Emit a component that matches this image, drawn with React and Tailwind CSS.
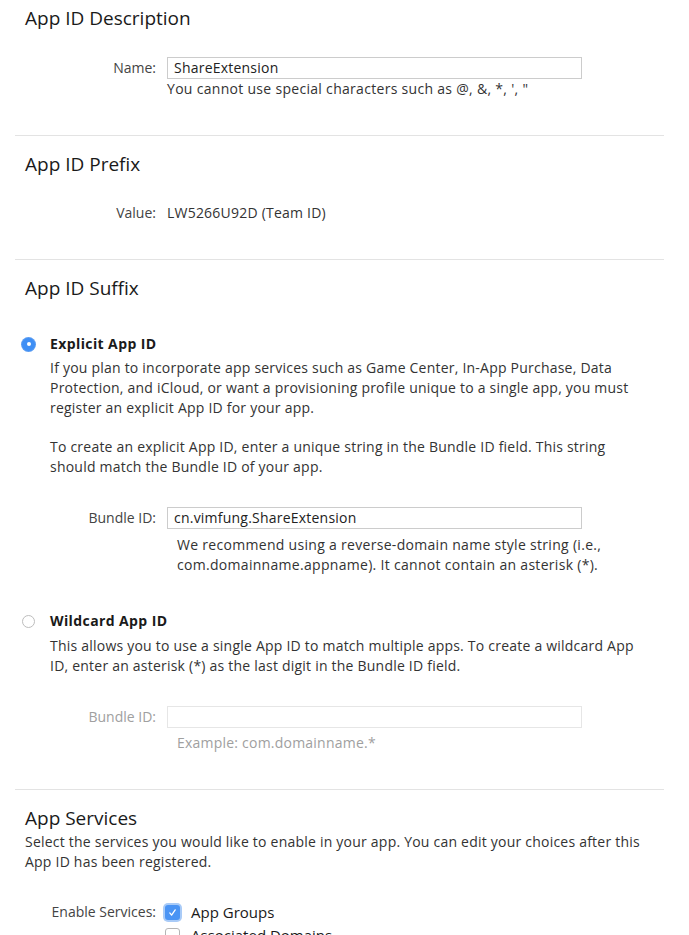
import React from "react";

const font = { fontFamily: '"Open Sans", "Liberation Sans", sans-serif' };

function Label({ children, disabled }) {
  return (
    <div className={`w-[152px] shrink-0 text-right pr-[11px] text-[14px] leading-[20px] tracking-normal ${disabled ? "text-[#a0a0a0]" : "text-[#444]"}`}>
      {children}
    </div>
  );
}

function Input({ value, disabled }) {
  return (
    <div className={`w-[415px] h-[22px] border ${disabled ? "border-[#e6e6e6]" : "border-[#cccccc]"} bg-white px-[6px] text-[14px] leading-[20px] text-[#222]`}>
      {value}
    </div>
  );
}

function Heading({ children }) {
  return <div className="pl-[10px] text-[19px] leading-[24px] tracking-normal text-[#1a1a1a]">{children}</div>;
}

function Radio({ checked }) {
  return checked ? (
    <div className="w-[13px] h-[13px] rounded-full bg-[#3f8ff5] flex items-center justify-center shadow-[0_0_0_1px_#5a9cf2]">
      <div className="w-[4px] h-[4px] rounded-full bg-white" />
    </div>
  ) : (
    <div className="w-[13px] h-[13px] rounded-full border border-[#bdbdbd] bg-white" />
  );
}

export default function App() {
  return (
    <div className="w-[689px] h-[935px] overflow-hidden bg-white pl-[15px] pr-[25px] text-[#333] tracking-[0.22px]" style={font}>
      {/* App ID Description */}
      <section className="pt-[6px] pb-[36px]">
        <Heading>App ID Description</Heading>
        <div className="mt-[27px] flex items-center">
          <Label>Name:</Label>
          <Input value="ShareExtension" />
        </div>
        <div className="pl-[152px] text-[14px] leading-[20px] text-[#333] tracking-[0.3px]">
          You cannot use special characters such as @, &amp;, *, ', "
        </div>
      </section>

      {/* App ID Prefix */}
      <section className="border-t border-[#e3e3e3] pt-[16px] pb-[36px]">
        <Heading>App ID Prefix</Heading>
        <div className="mt-[27px] flex items-center">
          <Label>Value:</Label>
          <div className="text-[14px] leading-[20px] text-[#333]">LW5266U92D (Team ID)</div>
        </div>
      </section>

      {/* App ID Suffix */}
      <section className="border-t border-[#e3e3e3] pt-[16px] pb-[36px]">
        <Heading>App ID Suffix</Heading>

        <div className="mt-[34px] flex items-center h-[20px]">
          <div className="w-[35px] pl-[7px] flex items-center">
            <Radio checked />
          </div>
          <div className="text-[14px] font-bold leading-[20px] text-[#1a1a1a] tracking-[0.4px]">Explicit App ID</div>
        </div>
        <div className="mt-[4px] pl-[35px] text-[14px] leading-[20px] text-[#333]">
          <div className="whitespace-nowrap">If you plan to incorporate app services such as Game Center, In-App Purchase, Data</div>
          <div className="whitespace-nowrap">Protection, and iCloud, or want a provisioning profile unique to a single app, you must</div>
          <div className="whitespace-nowrap">register an explicit App ID for your app.</div>
          <div className="mt-[19px] whitespace-nowrap">To create an explicit App ID, enter a unique string in the Bundle ID field. This string</div>
          <div className="whitespace-nowrap">should match the Bundle ID of your app.</div>
        </div>
        <div className="mt-[30px] flex items-center">
          <Label>Bundle ID:</Label>
          <Input value="cn.vimfung.ShareExtension" />
        </div>
        <div className="mt-[6px] pl-[162px] text-[14px] leading-[20px] text-[#333] tracking-[0.3px]">
          <div className="whitespace-nowrap">We recommend using a reverse-domain name style string (i.e.,</div>
          <div className="whitespace-nowrap">com.domainname.appname). It cannot contain an asterisk (*).</div>
        </div>

        <div className="mt-[36px] flex items-center h-[20px]">
          <div className="w-[35px] pl-[7px] flex items-center">
            <Radio />
          </div>
          <div className="text-[14px] font-bold leading-[20px] text-[#1a1a1a] tracking-[0.4px]">Wildcard App ID</div>
        </div>
        <div className="mt-[5px] pl-[35px] text-[14px] leading-[20px] text-[#333]">
          <div className="whitespace-nowrap">This allows you to use a single App ID to match multiple apps. To create a wildcard App</div>
          <div className="whitespace-nowrap">ID, enter an asterisk (*) as the last digit in the Bundle ID field.</div>
        </div>
        <div className="mt-[30px] flex items-center">
          <Label disabled>Bundle ID:</Label>
          <Input disabled value="" />
        </div>
        <div className="mt-[5px] pl-[162px] text-[14px] leading-[20px] text-[#a0a0a0]">Example: com.domainname.*</div>
      </section>

      {/* App Services */}
      <section className="border-t border-[#e3e3e3] pt-[16px]">
        <Heading>App Services</Heading>
        <div className="mt-[2px] pl-[10px] text-[14px] leading-[20px] text-[#333]">
          <div className="whitespace-nowrap">Select the services you would like to enable in your app. You can edit your choices after this</div>
          <div className="whitespace-nowrap">App ID has been registered.</div>
        </div>
        <div className="mt-[30px] flex">
          <Label>Enable Services:</Label>
          <div className="flex flex-col -ml-[2px]">
            <div className="flex items-center h-[20px]">
              <div className="w-[15px] h-[15px] rounded-[3px] bg-[#4a94f4] shadow-[0_0_0_2px_#a9cbf7] flex items-center justify-center">
                <svg width="9" height="9" viewBox="0 0 10 10" fill="none">
                  <path d="M2 5.5 L4 8 L8 2" stroke="white" strokeWidth="1.4" strokeLinecap="round" strokeLinejoin="round" />
                </svg>
              </div>
              <span className="ml-[11px] text-[15px] leading-[20px] tracking-normal text-[#1a1a1a]">App Groups</span>
            </div>
            <div className="flex items-center h-[20px] mt-[3px]">
              <div className="w-[15px] h-[15px] rounded-[3px] border border-[#b5b5b5] bg-white" />
              <span className="ml-[11px] text-[15px] leading-[20px] tracking-normal text-[#1a1a1a]">Associated Domains</span>
            </div>
          </div>
        </div>
      </section>
    </div>
  );
}
